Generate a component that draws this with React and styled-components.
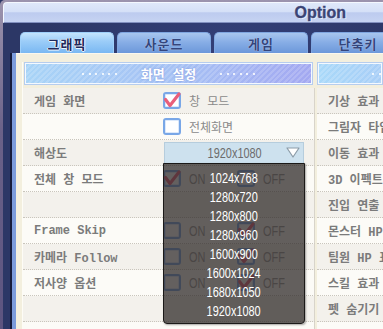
import React from 'react';
import styled, { createGlobalStyle } from 'styled-components';

const LABEL_FONT = `"Liberation Mono", "Noto Sans CJK KR", monospace`;
const KR_FONT = `"Noto Sans CJK KR", "Liberation Sans", sans-serif`;
const NARROW_FONT = `"Liberation Sans", "DejaVu Sans", sans-serif`;

const tabs = ['그래픽', '사운드', '게임', '단축키'];

const resolutions = [
  '1024x768',
  '1280x720',
  '1280x800',
  '1280x960',
  '1600x900',
  '1600x1024',
  '1680x1050',
  '1920x1080',
];

const leftRows = [
  { label: '게임 화면', kind: 'check', text: '창 모드', checked: true },
  { label: '', kind: 'check', text: '전체화면', checked: false },
  { label: '해상도', kind: 'select' },
  { label: '전체 창 모드', kind: 'toggle', on: true },
  { label: '' },
  { label: 'Frame Skip', kind: 'toggle', on: false },
  { label: '카메라 Follow', kind: 'toggle', on: false },
  { label: '저사양 옵션', kind: 'toggle', on: false },
  { label: '' },
  { label: '' },
];

const rightRows = [
  '기상 효과',
  '그림자 타입',
  '이동 효과',
  '3D 이펙트',
  '진입 연출',
  '몬스터 HP',
  '팀원 HP 표시',
  '스킬 효과',
  '펫 숨기기',
  '파티 표시',
];

const Checkbox = ({ checked }) => (
  <Box>
    {checked && (
      <CheckMark viewBox="0 0 18 17">
        <path d="M2.5 7.5 L7 13.5 L16 2" />
      </CheckMark>
    )}
  </Box>
);

const Dots = () => (
  <DotRow>
    {[0, 1, 2, 3, 4, 5].map((i) => (
      <Dot key={i} />
    ))}
  </DotRow>
);

const Toggle = ({ on }) => (
  <>
    <OptionItem>
      <Checkbox checked={on} />
      <SmallText>
        <Narrow $origin="left">ON</Narrow>
      </SmallText>
    </OptionItem>
    <OptionItem>
      <Checkbox checked={!on} />
      <SmallText>
        <Narrow $origin="left">OFF</Narrow>
      </SmallText>
    </OptionItem>
  </>
);

const ResolutionSelect = () => (
  <Select>
    <SelectValue>
      <Narrow>1920x1080</Narrow>
    </SelectValue>
    <svg width="14" height="11" viewBox="0 0 14 11">
      <polygon points="1,1 13,1 7,10" fill="#ffffff" stroke="#8c9ca8" strokeWidth="1.2" strokeLinejoin="round" />
    </svg>
    <DropList>
      {resolutions.map((r) => (
        <DropItem key={r}>
          <Narrow>{r}</Narrow>
        </DropItem>
      ))}
    </DropList>
  </Select>
);

const renderValue = (row) => {
  if (row.kind === 'check') {
    return (
      <OptionItem>
        <Checkbox checked={row.checked} />
        <ValueText>{row.text}</ValueText>
      </OptionItem>
    );
  }
  if (row.kind === 'select') return <ResolutionSelect />;
  if (row.kind === 'toggle') return <Toggle on={row.on} />;
  return null;
};

export default function App() {
  return (
    <>
      <GlobalStyle />
      <Window>
        <TitleBar>
          <Title>Option</Title>
        </TitleBar>
        <Frame>
          <TabStrip>
            {tabs.map((t, i) => (
              <Tab key={t} $active={i === 0}>
                {t}
              </Tab>
            ))}
          </TabStrip>
          <Body>
            <SideStrip />
            <Panel>
              <LeftCol>
                <SectionHeader>
                  <Dots />
                  <HeaderText>화면 설정</HeaderText>
                  <Dots />
                </SectionHeader>
                <RowList>
                  {leftRows.map((row, i) => (
                    <Row key={i} $alt={i % 2 === 1}>
                      <Label>{row.label}</Label>
                      <Value>{renderValue(row)}</Value>
                    </Row>
                  ))}
                </RowList>
              </LeftCol>
              <RightCol>
                <SectionHeader $light>
                  <Dots />
                </SectionHeader>
                <RowList>
                  {rightRows.map((label, i) => (
                    <Row key={i} $alt={i % 2 === 1}>
                      <Label>{label}</Label>
                    </Row>
                  ))}
                </RowList>
              </RightCol>
            </Panel>
          </Body>
        </Frame>
      </Window>
    </>
  );
}

const GlobalStyle = createGlobalStyle`
  html, body {
    margin: 0;
    padding: 0;
    background: #2c3766;
  }
  * {
    box-sizing: border-box;
  }
`;

const Window = styled.div`
  width: 383px;
  height: 329px;
  overflow: hidden;
  display: flex;
  flex-direction: column;
  padding: 2px 0 0 3px;
  background: linear-gradient(180deg, #9c94ae 0%, #6a6188 40%, #5c5480 100%);
  border-radius: 5px 0 0 0;
`;

const TitleBar = styled.div`
  height: 21px;
  flex-shrink: 0;
  display: flex;
  align-items: center;
  justify-content: flex-end;
  padding-right: 37px;
  background: linear-gradient(180deg, #dfe8fa 0%, #d5e0f7 45%, #bdcbef 52%, #c6d3f2 100%);
  border-top: 1px solid #f4f8ff;
  border-left: 1px solid #f4f8ff;
  border-bottom: 1px solid #8290c0;
  border-radius: 4px 0 0 0;
`;

const Title = styled.span`
  font-family: "Liberation Sans", sans-serif;
  font-weight: 700;
  font-size: 16px;
  color: #3b4475;
  text-shadow: 1px 1px 0 #e8eefc;
  -webkit-text-stroke: 0.3px #3b4475;
`;

const Frame = styled.div`
  flex: 1;
  display: flex;
  flex-direction: column;
  background: radial-gradient(ellipse at 60% 20%, #34407a 0%, #2c3766 60%);
  min-height: 0;
`;

const TabStrip = styled.div`
  height: 30px;
  flex-shrink: 0;
  display: flex;
  align-items: flex-end;
  gap: 3px;
  padding-left: 17px;
  overflow: hidden;
`;

const Tab = styled.div`
  width: 94px;
  height: 21px;
  flex-shrink: 0;
  display: flex;
  align-items: center;
  justify-content: center;
  border-radius: 5px 5px 0 0;
  border: 1px solid ${(p) => (p.$active ? '#9fd0fa' : '#7fa6e0')};
  border-bottom: none;
  background: ${(p) =>
    p.$active
      ? 'linear-gradient(180deg, #c4e4fd 0%, #9ccdf8 40%, #7ab8f2 100%)'
      : 'linear-gradient(180deg, #a8c6ee 0%, #88aee6 45%, #6c98da 100%)'};
  font-family: ${KR_FONT};
  font-weight: 700;
  font-size: 13px;
  color: ${(p) => (p.$active ? '#1f2a5c' : '#34457c')};
  text-shadow: ${(p) =>
    p.$active
      ? '0 0 1px #fff, 1px 0 0 #e8f4ff, -1px 0 0 #e8f4ff, 0 1px 0 #e8f4ff'
      : '0 0 1px #d4e4fa'};
  letter-spacing: 1px;
`;

const Body = styled.div`
  flex: 1;
  display: flex;
  min-height: 0;
`;

const SideStrip = styled.div`
  width: 13px;
  flex-shrink: 0;
  background: linear-gradient(90deg, #2c3766 0 7px, #151b3a 7px 9px, #7b9bdb 9px 13px);
`;

const Panel = styled.div`
  flex: 1;
  display: flex;
  padding: 8px 0 0 6px;
  background: #f3efde;
  border-top: 1px solid #fbf8ee;
  overflow: hidden;
`;

const LeftCol = styled.div`
  width: 293px;
  flex-shrink: 0;
  border-left: 1px solid #fdfcf6;
`;

const RightCol = styled.div`
  flex: 1;
  min-width: 0;
  padding-left: 2px;
`;

const SectionHeader = styled.div`
  height: 23px;
  margin: ${(p) => (p.$light ? '0' : '0 2px 0 1px')};
  display: flex;
  align-items: center;
  justify-content: ${(p) => (p.$light ? 'flex-start' : 'center')};
  padding-left: ${(p) => (p.$light ? '54px' : '0')};
  gap: 24px;
  border: 1px solid #b6cdee;
  box-shadow: inset 0 0 0 1px #f4f9ff;
  background:
    repeating-linear-gradient(135deg, rgba(255, 255, 255, 0.16) 0 2px, transparent 2px 4px),
    ${(p) =>
      p.$light
        ? 'linear-gradient(90deg, #a9d9f9, #a8cef7)'
        : 'linear-gradient(90deg, #a8d4f7 0%, #a6c0f4 55%, #a3a8f1 100%)'};
`;

const HeaderText = styled.span`
  font-family: ${LABEL_FONT};
  font-weight: 700;
  font-size: 13px;
  color: #ffffff;
  text-shadow: 0 0 2px rgba(90, 110, 200, 0.6);
`;

const DotRow = styled.span`
  display: flex;
  gap: 4.5px;
`;

const Dot = styled.span`
  width: 2px;
  height: 2px;
  background: rgba(255, 255, 255, 0.8);
`;

const RowList = styled.div`
  margin-top: 3px;
`;

const Row = styled.div`
  height: 26px;
  display: flex;
  align-items: center;
  border-bottom: 1px dotted #c9c5bc;
  background: ${(p) => (p.$alt ? '#fcfbf7' : '#f3f1ec')};
  ${LeftCol} & {
    border-right: 1px solid #d8d4ca;
  }
`;

const Label = styled.div`
  width: 140px;
  flex-shrink: 0;
  padding-left: 11px;
  font-family: ${LABEL_FONT};
  font-weight: 700;
  font-size: 12px;
  color: #7b7b7b;
  white-space: nowrap;
`;

const Value = styled.div`
  flex: 1;
  display: flex;
  align-items: center;
`;

const OptionItem = styled.div`
  width: 74px;
  display: flex;
  align-items: center;
  gap: 8px;
`;

const Box = styled.span`
  position: relative;
  width: 18px;
  height: 17px;
  flex-shrink: 0;
  border: 2px solid #79a7e7;
  border-radius: 3px;
  background: #ffffff;
  box-shadow: inset 0 0 0 1px #dce9fb;
`;

const CheckMark = styled.svg`
  position: absolute;
  left: -2px;
  top: -2px;
  width: 18px;
  height: 17px;
  overflow: visible;
  path {
    fill: none;
    stroke: #e95f7b;
    stroke-width: 3.2;
    stroke-linecap: round;
    stroke-linejoin: round;
  }
`;

const ValueText = styled.span`
  font-family: ${LABEL_FONT};
  font-size: 12px;
  color: #8a8a8a;
  white-space: nowrap;
`;

const Narrow = styled.span`
  display: inline-block;
  transform: scaleX(0.78);
  transform-origin: ${(p) => p.$origin || 'center'};
  white-space: nowrap;
`;

const SmallText = styled.span`
  font-family: ${NARROW_FONT};
  font-size: 14px;
  color: #9a9a9a;
`;

const Select = styled.div`
  position: relative;
  z-index: 5;
  width: 140px;
  height: 22px;
  margin-left: 1px;
  display: flex;
  align-items: center;
  padding: 0 3px 0 18px;
  background: #cde1ee;
  border: 1px solid #b6cddd;
`;

const SelectValue = styled.span`
  flex: 1;
  text-align: center;
  font-family: ${NARROW_FONT};
  font-size: 14px;
  color: #6c6c6c;
`;

const DropList = styled.div`
  position: absolute;
  top: calc(100% + 0px);
  left: -2px;
  width: 142px;
  padding: 5px 0 2px;
  background: rgba(46, 41, 39, 0.74);
  border: 1px solid #1b1918;
  border-radius: 0 0 4px 4px;
  box-shadow: 1px 1px 2px rgba(0, 0, 0, 0.35);
`;

const DropItem = styled.div`
  height: 19px;
  line-height: 19px;
  text-align: center;
  font-family: ${NARROW_FONT};
  font-size: 14px;
  color: #ffffff;
`;
